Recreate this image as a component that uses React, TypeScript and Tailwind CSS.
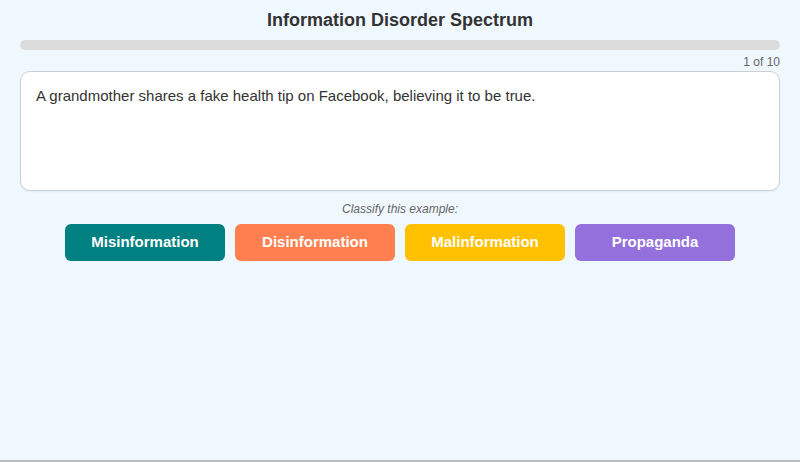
import React from "react";

const options = [
  { label: "Misinformation", className: "bg-[#008080]" },
  { label: "Disinformation", className: "bg-[#ff7f50]" },
  { label: "Malinformation", className: "bg-[#ffc000]" },
  { label: "Propaganda", className: "bg-[#9370db]" },
];

export default function App() {
  return (
    <div className="h-[462px] w-full bg-[#f0f8ff] border-b-2 border-[#bcbcbc] font-['Liberation_Sans',Arial,sans-serif] text-[#333]">
      <div className="px-5 pt-[10px]">
        {/* Title */}
        <h1 className="text-center text-[18px] font-bold leading-[21px]">
          Information Disorder Spectrum
        </h1>

        {/* Progress */}
        <div className="mt-[9px] h-[10px] w-full rounded-full bg-[#dcdcdc]" />
        <div className="mt-[6px] text-right text-[12px] leading-[13px] text-[#666]">
          1 of 10
        </div>

        {/* Scenario Card */}
        <div className="mt-[2px] h-[120px] rounded-[10px] border border-[#cfcfcf] bg-white px-[15px] py-[14px] shadow-[0_1px_2px_rgba(0,0,0,0.05)]">
          <p className="text-[15px] leading-[20px] text-[#333]">
            A grandmother shares a fake health tip on Facebook, believing it to be true.
          </p>
        </div>

        <div className="mt-[11px] text-center text-[12px] italic leading-[14px] text-[#666]">
          Classify this example:
        </div>

        {/* Choices */}
        <div className="mt-[8px] flex justify-center gap-[10px]">
          {options.map((o) => (
            <button
              key={o.label}
              className={`h-[37px] w-[160px] rounded-[6px] text-[15px] font-bold text-white ${o.className}`}
            >
              {o.label}
            </button>
          ))}
        </div>
      </div>
    </div>
  );
}
